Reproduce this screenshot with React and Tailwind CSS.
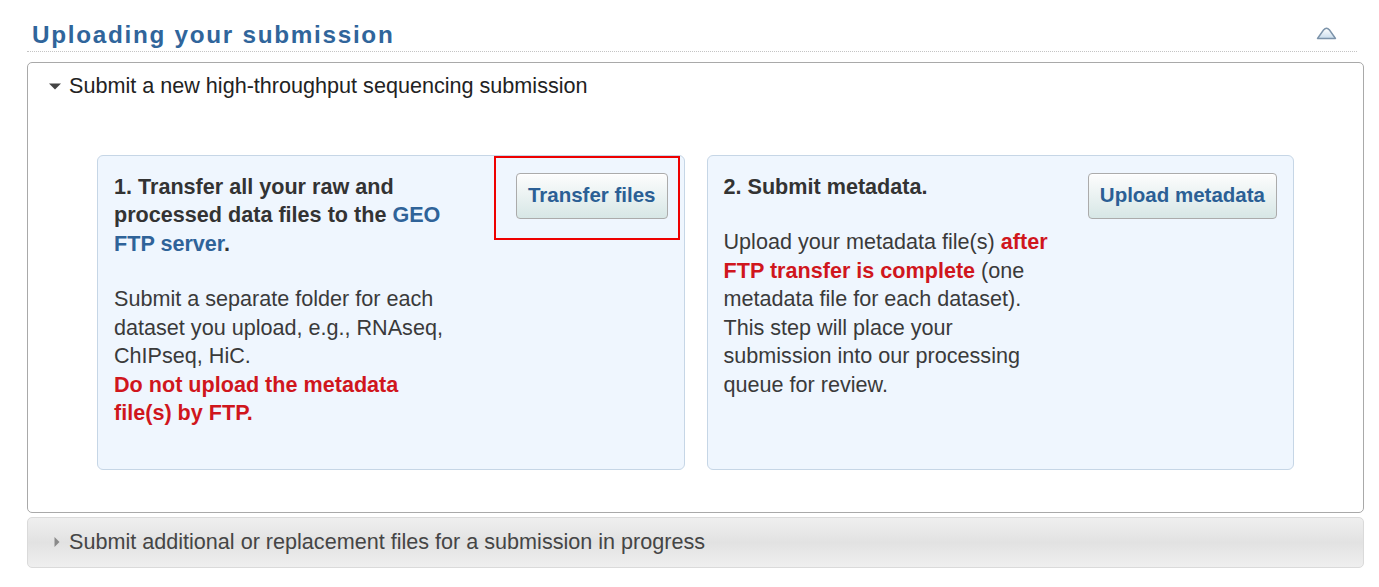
import React from 'react';

const CollapseIcon = () => (
  <svg width="21" height="13" viewBox="0 0 21 13" className="mt-[6px] mr-[20px]">
    <defs>
      <linearGradient id="cg" x1="0" y1="0" x2="0" y2="1">
        <stop offset="0" stopColor="#ffffff" />
        <stop offset="1" stopColor="#c9dcec" />
      </linearGradient>
    </defs>
    <path
      d="M1.5 11.5 L7.5 3 Q10.5 -0.5 13.5 3 L19.5 11.5 Z"
      fill="url(#cg)"
      stroke="#7c93aa"
      strokeWidth="1.4"
      strokeLinejoin="round"
    />
  </svg>
);

const StepButton = ({ label }) => (
  <button className="shrink-0 h-[46px] px-[11px] rounded-[4px] border border-[#ababab] bg-gradient-to-b from-[#fdfdfd] to-[#d7e7e6] text-[20.5px] font-bold text-[#2b5f95] leading-none shadow-[inset_0_1px_0_#fff]">
    {label}
  </button>
);

export default function App() {
  return (
    <div className="bg-white min-h-screen pl-[27px] pt-[21px] font-['Liberation_Sans',Arial,sans-serif] text-[#333]">
      {/* section title */}
      <div className="w-[1330px] flex items-start justify-between border-b border-dotted border-[#c4c4c4] pb-[2px] pl-[5px]">
        <h2 className="text-[24.3px] leading-[28px] font-bold tracking-[1.7px] text-[#30659b]">
          Uploading your submission
        </h2>
        <CollapseIcon />
      </div>

      {/* expanded panel */}
      <div className="mt-[10px] w-[1337px] border border-[#a9a9a9] rounded-[5px] bg-white pt-[9px] pb-[42px]">
        <div className="flex items-center pl-[21px] text-[21.6px] leading-[28.5px] text-[#222]">
          <svg width="12" height="7" viewBox="0 0 12 7" className="mr-[8px]">
            <polygon points="0,0.5 12,0.5 6,6.5" fill="#444" />
          </svg>
          <span>Submit a new high-throughput sequencing submission</span>
        </div>

        <div className="mt-[54px] px-[69px] flex gap-[22px]">
          {/* step 1 */}
          <div className="relative flex-1 flex justify-between border border-[#c6d6e6] rounded-[6px] bg-[#eff6fe] pl-[16px] pr-[16px] pt-[17px] pb-[41px]">
            <div className="w-[338px] text-[21.6px] leading-[28.5px]">
              <p className="font-bold text-[#333]">
                1. Transfer all your raw and processed data files to the{' '}
                <span className="text-[#2f6399]">GEO FTP server</span>.
              </p>
              <p className="mt-[27px] text-[#3a3a3a]">
                Submit a separate folder for each dataset you upload, e.g., RNAseq, ChIPseq, HiC.
                <br />
                <span className="font-bold text-[#d0161d]">Do not upload the metadata file(s) by FTP.</span>
              </p>
            </div>
            <StepButton label="Transfer files" />
            <div className="absolute top-0 right-[4px] w-[186px] h-[84px] border-2 border-[#ee0000] pointer-events-none" />
          </div>

          {/* step 2 */}
          <div className="flex-1 flex justify-between border border-[#c6d6e6] rounded-[6px] bg-[#eff6fe] pl-[16px] pr-[16px] pt-[17px] pb-[41px]">
            <div className="w-[338px] text-[21.6px] leading-[28.5px]">
              <p className="font-bold text-[#333]">2. Submit metadata.</p>
              <p className="mt-[27px] text-[#3a3a3a]">
                Upload your metadata file(s){' '}
                <span className="font-bold text-[#d0161d]">after FTP transfer is complete</span> (one
                metadata file for each dataset). This step will place your submission into our
                processing queue for review.
              </p>
            </div>
            <StepButton label="Upload metadata" />
          </div>
        </div>
      </div>

      {/* collapsed panel */}
      <div className="mt-[4px] w-[1337px] h-[51px] flex items-center pl-[26px] border border-[#dadada] rounded-[5px] bg-gradient-to-b from-[#efefef] via-[#e2e2e2] to-[#efefef]">
        <svg width="6" height="10" viewBox="0 0 6 10" className="mr-[9px]">
          <polygon points="0.5,0 5.5,5 0.5,10" fill="#8a8a8a" />
        </svg>
        <span className="text-[21.6px] leading-[28.5px] text-[#454545]">
          Submit additional or replacement files for a submission in progress
        </span>
      </div>
    </div>
  );
}
